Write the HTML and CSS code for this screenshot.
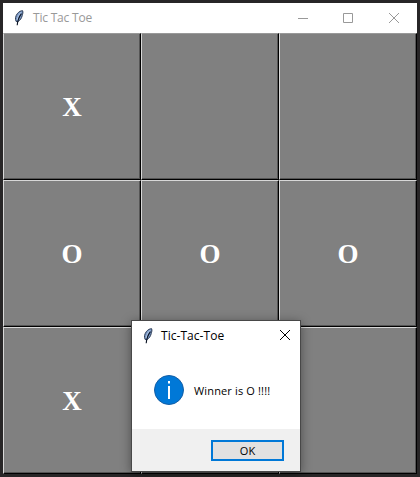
FILE: index.html
```html
<!DOCTYPE html>
<html lang="en">
<head>
<meta charset="utf-8">
<title>Tic Tac Toe</title>
<link rel="stylesheet" href="styles.css">
</head>
<body>
<svg class="defs" aria-hidden="true">
  <symbol id="feather" viewBox="0 0 12 18">
    <path d="M3.200 12.500C2 10 2.400 7.200 4.300 4.700C5.800 2.700 8 1.600 9.600 1.700C10.200 3.300 9.700 5 9.200 6.600C8.600 9.200 7.200 11.300 4.800 12.700Z" fill="#7d9bc8" stroke="#24344f" stroke-width="1"/>
    <path d="M8 3.200C6 5.500 4.700 8 4.200 11" fill="none" stroke="#c0d3ed" stroke-width=".8"/>
    <path d="M8.500 4.700C6.200 7.500 4.800 10 4.200 16.300" fill="none" stroke="#0b1424" stroke-width="1.100"/>
  </symbol>
</svg>
<main class="window">
  <header class="titlebar">
    <svg class="feather"><use href="#feather"/></svg>
    <span class="title">Tic Tac Toe</span>
    <svg class="controls" viewBox="0 0 102 12">
      <path d="M1 6.500H11M46.500 1.500H55.500V10.500H46.500ZM92 1L102 11M102 1L92 11"/>
    </svg>
  </header>
  <div class="board">
    <button class="cell">X</button><button class="cell"></button><button class="cell"></button>
    <button class="cell">O</button><button class="cell">O</button><button class="cell">O</button>
    <button class="cell">X</button><button class="cell"></button><button class="cell"></button>
  </div>
</main>
<section class="dialog">
  <header class="dialog-title">
    <svg class="feather"><use href="#feather"/></svg>
    <span class="dialog-name">Tic-Tac-Toe</span>
    <svg class="close" viewBox="0 0 12 12"><path d="M1 1L11 11M11 1L1 11"/></svg>
  </header>
  <div class="message">
    <svg class="info" viewBox="0 0 30 30">
      <circle cx="15" cy="15" r="14.500" fill="#0078d7" stroke="#145ea5"/>
      <path d="M14 6H16V8.500H14ZM14 11H16V24H14Z" fill="#fff"/>
    </svg>
    <span class="text">Winner is O !!!!</span>
  </div>
  <footer class="actions"><button class="ok">OK</button></footer>
</section>
</body>
</html>
```
FILE: styles.css
```css
* { box-sizing: border-box; }
body {
  margin: 0;
  width: 420px;
  height: 477px;
  padding: 3px;
  overflow: hidden;
  background: #282627;
  font-family: "Open Sans", "Noto Sans", sans-serif;
  font-size: 12px;
}
.defs { position: absolute; width: 0; height: 0; }
.window { width: 414px; }
.titlebar {
  display: flex;
  align-items: center;
  height: 30px;
  padding: 0 18px 0 10px;
  background: #fff;
  color: #999;
}
.feather { width: 12px; height: 18px; flex: none; }
.title {
  margin-left: 8px;
  line-height: 30px;
  letter-spacing: -.2px;
  white-space: nowrap;
}
.controls {
  width: 102px;
  height: 12px;
  margin-left: auto;
  overflow: visible;
  fill: none;
  stroke: #999;
}
.board {
  display: grid;
  grid-template-columns: repeat(3, 138px);
  grid-template-rows: repeat(3, 147px);
}
.cell {
  margin: 0;
  padding: 2px 0 0;
  border: 1px solid;
  border-color: #d8d8d8 #000 #000 #d8d8d8;
  border-radius: 0;
  background: #808080;
  box-shadow: inset -1px -1px #555;
  color: #fff;
  font: bold 27px "Liberation Serif", serif;
}
.cell:nth-child(-n+3) { border-top-color: #999; }
.dialog {
  position: absolute;
  left: 131px;
  top: 320px;
  width: 170px;
  height: 152px;
  border: 1px solid #484848;
  background: #fff;
  color: #000;
  box-shadow: 0 2px 10px rgba(0, 0, 0, .4);
}
.dialog-title {
  display: flex;
  align-items: center;
  height: 29px;
  padding: 0 9px 0 10px;
}
.dialog-name { margin-left: 7px; letter-spacing: .05px; white-space: nowrap; }
.close {
  width: 12px;
  height: 12px;
  margin-left: auto;
  margin-top: -1px;
  fill: none;
  stroke: #000;
  stroke-width: 1;
}
.message {
  display: flex;
  align-items: center;
  height: 79px;
  padding-left: 22px;
}
.info { width: 30px; height: 30px; flex: none; }
.text {
  margin-left: 10px;
  padding-top: 1px;
  font-size: 11px;
  letter-spacing: .15px;
  white-space: nowrap;
}
.actions {
  display: flex;
  justify-content: flex-end;
  height: 42px;
  padding: 11px 16px 10px;
  background: #f0f0f0;
}
.ok {
  width: 73px;
  height: 21px;
  padding: 0;
  border: 2px solid #0078d7;
  border-radius: 0;
  background: #e1e1e1;
  color: #000;
  font: 11px/17px "Open Sans", sans-serif;
}
```
